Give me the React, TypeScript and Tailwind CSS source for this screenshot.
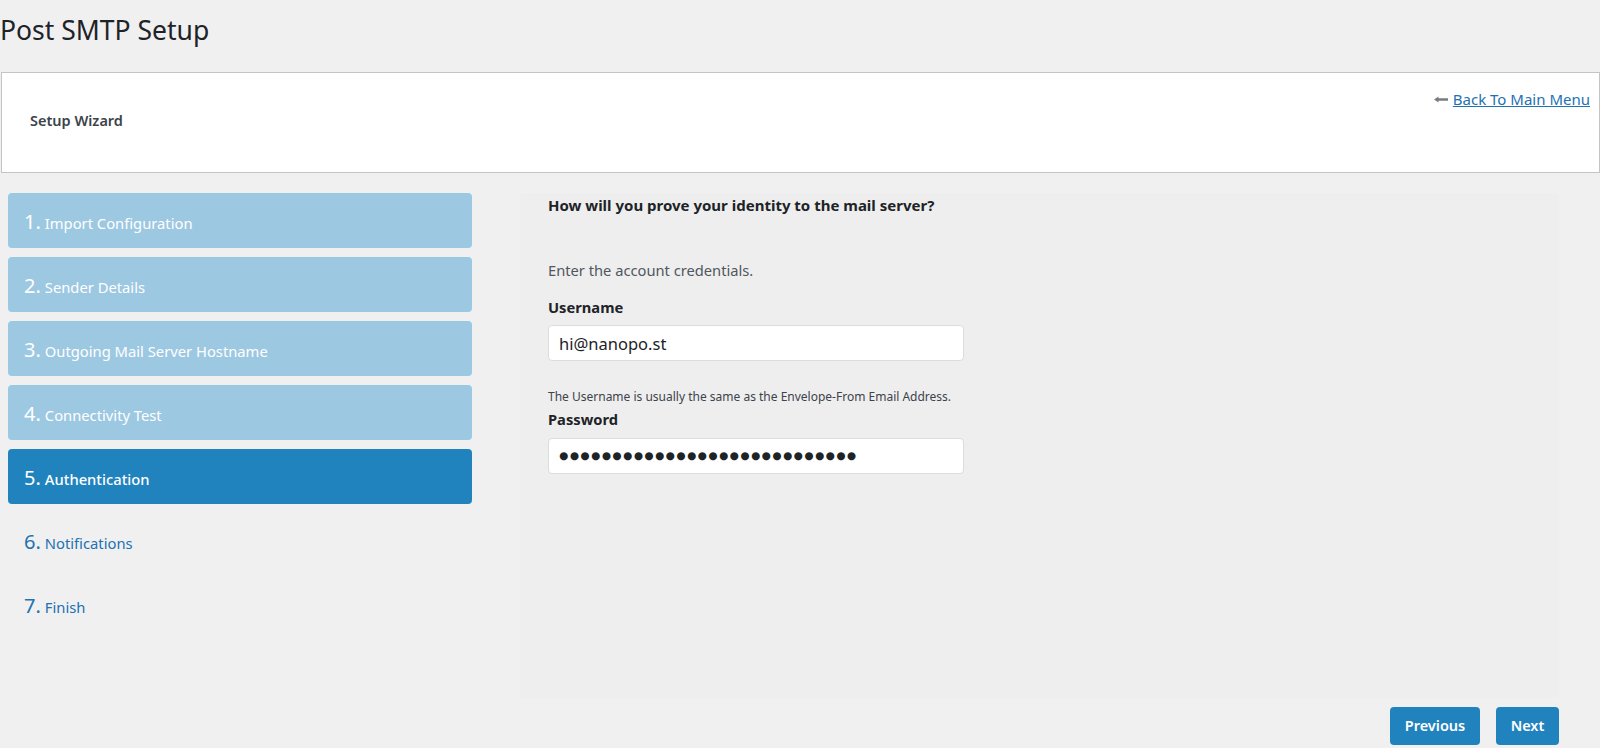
import { useState } from "react";

const steps = [
  { n: 1, label: "Import Configuration", state: "done" },
  { n: 2, label: "Sender Details", state: "done" },
  { n: 3, label: "Outgoing Mail Server Hostname", state: "done" },
  { n: 4, label: "Connectivity Test", state: "done" },
  { n: 5, label: "Authentication", state: "active" },
  { n: 6, label: "Notifications", state: "todo" },
  { n: 7, label: "Finish", state: "todo" },
];

function Step({ n, label, state }: { n: number; label: string; state: string }) {
  const box =
    state === "active"
      ? "bg-[#2083be] text-white"
      : state === "done"
      ? "bg-[#9dc8e2] text-white"
      : "bg-transparent text-[#2271b1]";
  return (
    <div className={`h-[55px] rounded-[4px] flex items-center pl-[16px] pt-[3px] ${box}`}>
      <span className="text-[20px] leading-none mr-[4px]">{n}.</span>
      <span className={`text-[14.75px] leading-none pt-[3px] ${state === "active" ? "font-medium" : ""}`}>
        {label}
      </span>
    </div>
  );
}

export default function App() {
  const [username, setUsername] = useState("hi@nanopo.st");

  return (
    <div className="min-h-[748px] bg-[#f0f0f1] font-['Noto_Sans','Open_Sans',sans-serif] text-[#1d2327]">
      <h1 className="text-[26.5px] font-normal leading-none pt-[17px] h-[72px] text-[#1d2327]">
        Post SMTP Setup
      </h1>

      <div className="ml-[1px] h-[101px] bg-white border border-[#c3c4c7] relative flex items-center pl-[28px] pb-[4px]">
        <span className="text-[14.5px] font-semibold text-[#3c434a]">Setup Wizard</span>
        <a href="#" className="absolute right-[9px] top-[15px] text-[15px] text-[#2271b1] flex items-center gap-[5px]">
          <svg width="14" height="7" viewBox="0 0 14 7" className="mt-[1px]">
            <path d="M0 3.5 L4.5 0.5 L4.5 2.3 L14 2.3 L14 4.7 L4.5 4.7 L4.5 6.5 Z" fill="#787c82" />
          </svg>
          <span className="underline">Back To Main Menu</span>
        </a>
      </div>

      <div className="flex pt-[20px]">
        <div className="w-[464px] ml-[8px] flex flex-col gap-[9px]">
          {steps.map((s) => (
            <Step key={s.n} {...s} />
          ))}
        </div>

        <div className="ml-[48px] w-[1039px] flex flex-col">
          <div className="h-[505px] bg-[#eeeeee] rounded-[3px] pl-[28px] pt-[1px]">
            <h2 className="text-[15px] font-bold text-[#1d2327] leading-[22px]">
              How will you prove your identity to the mail server?
            </h2>
            <p className="mt-[44px] text-[14.7px] text-[#50575e] leading-[20px]">Enter the account credentials.</p>
            <label className="block mt-[17px] text-[14.7px] font-bold text-[#1d2327] leading-[20px]">Username</label>
            <input
              value={username}
              onChange={(e) => setUsername(e.target.value)}
              className="mt-[8px] block w-[416px] h-[36px] bg-white border border-[#dcdcde] rounded-[4px] px-[10px] text-[16.5px] text-[#1d2327] outline-none"
            />
            <p className="mt-[28px] text-[12px] text-[#3c434a] leading-[16px]">
              The Username is usually the same as the Envelope-From Email Address.
            </p>
            <label className="block mt-[4px] text-[14.7px] font-bold text-[#1d2327] leading-[20px]">Password</label>
            <div className="mt-[9px] w-[416px] h-[36px] bg-white border border-[#dcdcde] rounded-[4px] pl-[10px] flex items-center text-[#1d2327] font-['DejaVu_Sans',sans-serif] text-[10.5px] tracking-[1.5px] overflow-hidden whitespace-nowrap">
              ●●●●●●●●●●●●●●●●●●●●●●●●●●●●
            </div>
          </div>
          <div className="flex justify-end gap-[16px] mt-[9px]">
            <button className="h-[38px] w-[90px] bg-[#2083be] text-white text-[14.5px] font-semibold rounded-[4px]">
              Previous
            </button>
            <button className="h-[38px] w-[63px] bg-[#2083be] text-white text-[14.5px] font-semibold rounded-[4px]">
              Next
            </button>
          </div>
        </div>
      </div>
    </div>
  );
}
